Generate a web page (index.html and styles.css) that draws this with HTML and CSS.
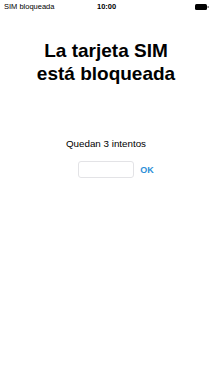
FILE: index.html
```html
<!DOCTYPE html>
<html lang="es">
<head>
    <meta charset="UTF-8">
    <meta name="viewport" content="width=device-width, initial-scale=1.0">
    <title>SIM bloqueada</title>
    <link rel="stylesheet" href="styles.css">
</head>
<body>
    <div class="status-bar">
        <span class="carrier">SIM bloqueada</span>
        <span class="clock">10:00</span>
        <svg class="battery" width="14" height="6" viewBox="0 0 14 6">
            <rect x="0" y="0" width="12" height="6" rx="1.5" fill="#000"/>
            <rect x="12.5" y="2" width="1.2" height="2" fill="#666"/>
        </svg>
    </div>

    <div class="sim-lock">
        <h1>La tarjeta SIM<br>está bloqueada</h1>
        <p class="attempts">Quedan 3 intentos</p>
        <div class="pin-row">
            <input type="password" class="pin-input">
            <button class="ok-btn">OK</button>
        </div>
    </div>
</body>
</html>
```

FILE: styles.css
```css
html {
    overflow: hidden;
}
body {
    margin: 0;
    padding: 0;
    background: #ffffff;
    color: #000000;
    font-family: 'Liberation Sans', Arial, sans-serif;
}

.status-bar {
    height: 13px;
    display: flex;
    align-items: center;
    justify-content: space-between;
    padding: 0 3px 0 4px;
    font-size: 7.5px;
}
.carrier {
    width: 60px;
}
.clock {
    font-weight: bold;
    margin-left: 33px;
}
.battery {
    display: block;
    margin-left: auto;
}

.sim-lock {
    text-align: center;
}
.sim-lock h1 {
    margin: 26px 0 0;
    font-size: 19px;
    line-height: 23px;
    font-weight: bold;
}
.attempts {
    margin: 53px 0 0;
    font-size: 9.8px;
    line-height: 11px;
}
.pin-row {
    display: flex;
    justify-content: center;
    align-items: center;
    margin-top: 12px;
    padding-left: 20px;
}
.pin-input {
    width: 56px;
    height: 17px;
    box-sizing: border-box;
    border: 1px solid #e3e3e6;
    border-radius: 3px;
    margin: 0;
    padding: 0;
    outline: none;
}
.ok-btn {
    border: none;
    background: none;
    padding: 0;
    margin-left: 6px;
    color: #2c8fd7;
    font-family: 'Liberation Sans', Arial, sans-serif;
    font-weight: bold;
    font-size: 9px;
}
```
